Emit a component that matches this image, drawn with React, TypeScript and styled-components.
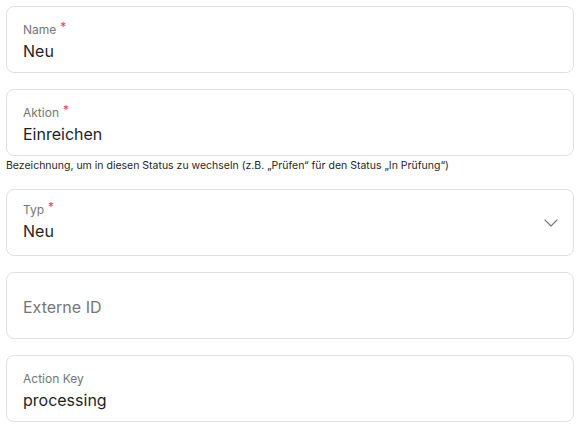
import styled, { createGlobalStyle } from 'styled-components';

const GlobalStyle = createGlobalStyle`
  body {
    margin: 0;
    background: #ffffff;
    font-family: "Inter Variable", Inter, "Open Sans", sans-serif;
  }
`;

const Form = styled.div`
  display: flex;
  flex-direction: column;
  gap: 16px;
  padding: 6px 6px;
`;

const Group = styled.div`
  display: flex;
  flex-direction: column;
`;

const Field = styled.div<{ $centered?: boolean; $select?: boolean }>`
  position: relative;
  box-sizing: border-box;
  height: 67px;
  border: 1px solid #e0e0e0;
  border-radius: 8px;
  padding: ${(p) =>
    p.$centered ? '2px 16px 0' : p.$select ? '12px 40px 9px 16px' : '15px 40px 8px 16px'};
  display: flex;
  flex-direction: column;
  justify-content: ${(p) => (p.$centered ? 'center' : 'flex-start')};
  gap: 1px;
`;

const Label = styled.div`
  font-size: 12px;
  line-height: 16px;
  color: #767676;
`;

const Required = styled.span`
  color: #ee3a52;
  margin-left: 4px;
  font-size: 12px;
  position: relative;
  top: -3px;
`;

const Value = styled.div<{ $placeholder?: boolean }>`
  font-size: 16px;
  line-height: 24px;
  color: ${(p) => (p.$placeholder ? '#767676' : '#1f1f1f')};
`;

const Helper = styled.div`
  margin-top: 3px;
  font-size: 10.5px;
  line-height: 14px;
  color: #1f1f1f;
`;

const Chevron = styled.svg`
  position: absolute;
  right: 15px;
  top: 50%;
  transform: translateY(-50%);
`;

export default function App() {
  return (
    <>
      <GlobalStyle />
      <Form>
        <Field>
          <Label>
            Name<Required>*</Required>
          </Label>
          <Value>Neu</Value>
        </Field>
        <Group>
          <Field>
            <Label>
              Aktion<Required>*</Required>
            </Label>
            <Value>Einreichen</Value>
          </Field>
          <Helper>
            Bezeichnung, um in diesen Status zu wechseln (z.B. „Prüfen“ für den Status „In Prüfung“)
          </Helper>
        </Group>
        <Field $select>
          <Label>
            Typ<Required>*</Required>
          </Label>
          <Value>Neu</Value>
          <Chevron width="14" height="14" viewBox="0 0 14 14" fill="none">
            <path d="M1 4l6 6 6-6" stroke="#767676" strokeWidth="1.1" strokeLinecap="round" strokeLinejoin="round" />
          </Chevron>
        </Field>
        <Field $centered>
          <Value $placeholder>Externe ID</Value>
        </Field>
        <Field>
          <Label>Action Key</Label>
          <Value>processing</Value>
        </Field>
      </Form>
    </>
  );
}
